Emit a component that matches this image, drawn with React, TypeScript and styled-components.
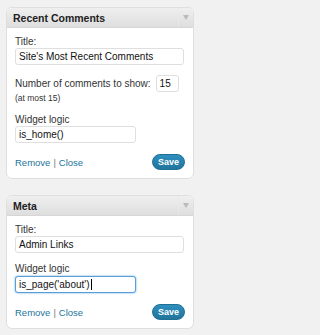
import React from "react";
import styled, { createGlobalStyle } from "styled-components";

const Global = createGlobalStyle`
  html, body { margin: 0; padding: 0; background: #f1f1f1; }
  body { font-family: "Liberation Sans", Arial, sans-serif; }
`;

const Page = styled.div`
  padding: 7px 6px;
  display: flex;
  flex-direction: column;
  gap: 16px;
`;

const Card = styled.div`
  width: 188px;
  box-sizing: border-box;
  border: 1px solid #dfdfdf;
  border-radius: 6px;
  background: #fff;
  overflow: hidden;
`;

const Header = styled.div`
  height: 19px;
  display: flex;
  align-items: stretch;
  background: linear-gradient(to bottom, #efefef, #dedede);
  border-bottom: 1px solid #d6d6d6;
`;

const HeaderTitle = styled.div`
  flex: 1;
  display: flex;
  align-items: center;
  padding-left: 6px;
  font-size: 10.5px;
  font-weight: bold;
  color: #222;
`;

const Toggle = styled.div`
  width: 14px;
  border-left: 1px solid #e8e8e8;
  display: flex;
  align-items: center;
  justify-content: center;
  &::after {
    content: "";
    border-left: 3.5px solid transparent;
    border-right: 3.5px solid transparent;
    border-top: 5px solid #bbbbbb;
  }
`;

const Body = styled.div`
  padding: 7px 8px 8px 8px;
  display: flex;
  flex-direction: column;
`;

const Label = styled.div<{ $mt?: number }>`
  font-size: 10px;
  line-height: 13px;
  color: #333;
  white-space: nowrap;
  margin-top: ${(p) => p.$mt ?? 0}px;
`;

const Input = styled.div<{ $w: number; $focus?: boolean }>`
  box-sizing: border-box;
  width: ${(p) => p.$w}px;
  height: 17px;
  margin-top: ${(p) => (p.$focus ? 1 : 0)}px;
  border: 1px solid ${(p) => (p.$focus ? "#5b9dd9" : "#dfdfdf")};
  box-shadow: ${(p) => (p.$focus ? "0 0 2px rgba(30,140,190,.8)" : "none")};
  border-radius: 3px;
  padding: 0 3px;
  font-size: 10px;
  line-height: 15px;
  color: #111;
  background: #fff;
  white-space: nowrap;
  overflow: hidden;
  flex-shrink: 0;
`;

const Caret = styled.span`
  display: inline-block;
  width: 1px;
  height: 11px;
  background: #000;
  vertical-align: -2px;
  margin-left: 1px;
`;

const NumRow = styled.div`
  display: flex;
  align-items: center;
  gap: 5px;
  margin-top: 10px;
`;

const Small = styled.div`
  font-size: 8.5px;
  line-height: 11px;
  color: #333;
  margin-top: 1px;
`;

const Actions = styled.div`
  display: flex;
  align-items: center;
  justify-content: space-between;
  margin-top: 11px;
`;

const Links = styled.div`
  font-size: 9.5px;
  color: #21759b;
`;

const Sep = styled.span`
  color: #777;
  margin: 0 3px;
`;

const Save = styled.button`
  width: 33px;
  height: 16px;
  padding: 0;
  border: 1px solid #1f6f94;
  border-radius: 10px;
  background: linear-gradient(to bottom, #2e8fc0, #21759b);
  color: #fff;
  font-family: inherit;
  font-size: 9px;
  font-weight: bold;
  line-height: 14px;
`;

export default function App() {
  return (
    <>
      <Global />
      <Page>
        <Card>
          <Header>
            <HeaderTitle>Recent Comments</HeaderTitle>
            <Toggle />
          </Header>
          <Body>
            <Label>Title:</Label>
            <Input $w={169}>Site's Most Recent Comments</Input>
            <NumRow>
              <Label>Number of comments to show:</Label>
              <Input $w={23}>15</Input>
            </NumRow>
            <Small>(at most 15)</Small>
            <Label $mt={9}>Widget logic</Label>
            <Input $w={121}>is_home()</Input>
            <Actions>
              <Links>
                Remove<Sep>|</Sep>Close
              </Links>
              <Save>Save</Save>
            </Actions>
          </Body>
        </Card>
        <Card>
          <Header>
            <HeaderTitle>Meta</HeaderTitle>
            <Toggle />
          </Header>
          <Body>
            <Label>Title:</Label>
            <Input $w={169}>Admin Links</Input>
            <Label $mt={9}>Widget logic</Label>
            <Input $w={121} $focus>
              is_page('about')<Caret />
            </Input>
            <Actions>
              <Links>
                Remove<Sep>|</Sep>Close
              </Links>
              <Save>Save</Save>
            </Actions>
          </Body>
        </Card>
      </Page>
    </>
  );
}
